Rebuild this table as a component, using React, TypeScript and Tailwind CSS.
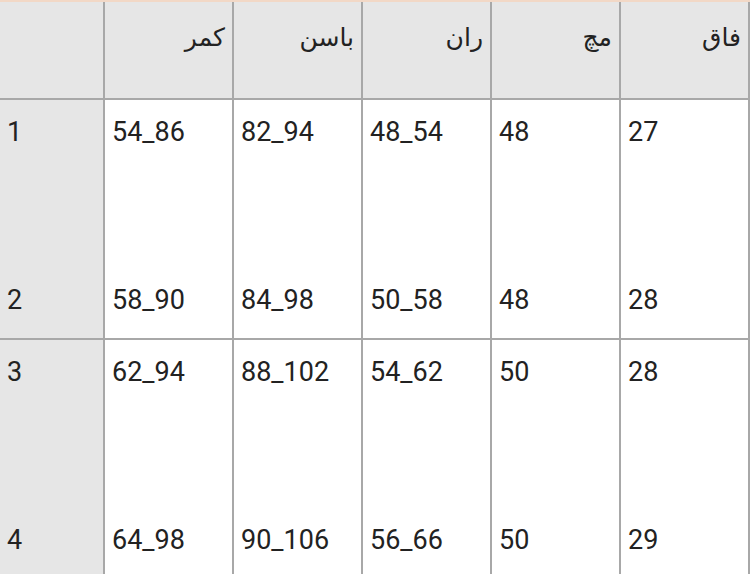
const headers = ["کمر", "باسن", "ران", "مچ", "فاق"];

const rows = [
  {
    nums: ["1", "2"],
    cells: [
      ["54_86", "58_90"],
      ["82_94", "84_98"],
      ["48_54", "50_58"],
      ["48", "48"],
      ["27", "28"],
    ],
  },
  {
    nums: ["3", "4"],
    cells: [
      ["62_94", "64_98"],
      ["88_102", "90_106"],
      ["54_62", "56_66"],
      ["50", "50"],
      ["28", "29"],
    ],
  },
];

const App = () => {
  return (
    <div
      className="w-[750px] h-[574px] overflow-hidden bg-white text-[#222]"
      style={{ fontFamily: "Roboto, 'DejaVu Sans', 'Noto Sans', sans-serif" }}
    >
      {/* Header */}
      <div className="flex h-[100px] bg-[#e6e6e6] border-t-2 border-t-[#f2d8c6] border-b-2 border-b-[#a8a8a8]">
        <div className="w-[105px] shrink-0 border-r-2 border-[#a8a8a8]"></div>
        {headers.map((h, i) => (
          <div
            key={i}
            className="w-[129px] shrink-0 border-r-2 border-[#a8a8a8] pt-[19px] pr-[7px] text-right text-[25px] leading-[34px]"
          >
            <span dir="rtl">{h}</span>
          </div>
        ))}
      </div>

      {/* Body */}
      {rows.map((row, r) => (
        <div key={r} className="flex h-[240px] border-b-2 border-[#a8a8a8]">
          <div className="w-[105px] shrink-0 bg-[#e6e6e6] border-r-2 border-[#a8a8a8] flex flex-col justify-between pl-[7px] pt-[17px] pb-[22px] text-[27px] leading-[31px]">
            <span>{row.nums[0]}</span>
            <span>{row.nums[1]}</span>
          </div>
          {row.cells.map((c, i) => (
            <div
              key={i}
              className="w-[129px] shrink-0 border-r-2 border-[#a8a8a8] flex flex-col justify-between pl-[7px] pt-[17px] pb-[22px] text-[27px] leading-[31px]"
            >
              <span>{c[0]}</span>
              <span>{c[1]}</span>
            </div>
          ))}
        </div>
      ))}
    </div>
  );
};

export default App;
